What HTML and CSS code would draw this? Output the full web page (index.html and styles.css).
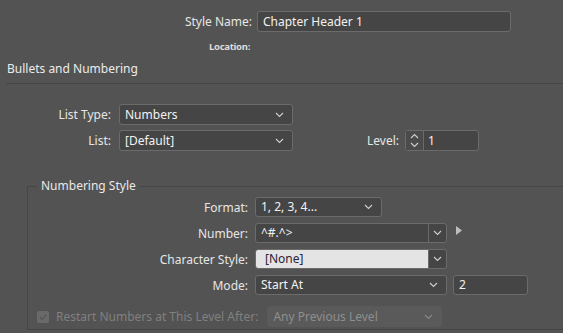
FILE: index.html
```html
<!DOCTYPE html>
<html>
<head>
<meta charset="utf-8">
<link rel="stylesheet" href="styles.css">
</head>
<body>
<div class="page">
  <div class="name-row">
    <span class="name-label">Style Name:</span>
    <div class="field name-field">Chapter Header 1</div>
  </div>
  <div class="loc-row"><span class="loc-label">Location:</span></div>
  <div class="heading">Bullets and Numbering</div>
  <div class="sep"></div>

  <div class="list-block">
    <div class="lrow">
      <span class="llabel">List Type:</span>
      <div class="field select list-select"><span class="val">Numbers</span>
        <svg class="chev" width="9" height="6" viewBox="0 0 9 6"><polyline points="1,1 4.5,4.5 8,1" fill="none" stroke="#cfcfcf" stroke-width="1.1"/></svg>
      </div>
    </div>
    <div class="lrow">
      <span class="llabel">List:</span>
      <div class="field select list-select"><span class="val">[Default]</span>
        <svg class="chev" width="9" height="6" viewBox="0 0 9 6"><polyline points="1,1 4.5,4.5 8,1" fill="none" stroke="#cfcfcf" stroke-width="1.1"/></svg>
      </div>
      <span class="level-label">Level:</span>
      <div class="field spinner">
        <div class="spin-btns">
          <svg width="9" height="6" viewBox="0 0 9 6"><polyline points="1,5 4.5,1.5 8,5" fill="none" stroke="#cfcfcf" stroke-width="1.1"/></svg>
          <svg width="9" height="6" viewBox="0 0 9 6"><polyline points="1,1 4.5,4.5 8,1" fill="none" stroke="#cfcfcf" stroke-width="1.1"/></svg>
        </div>
        <span class="spin-val">1</span>
      </div>
    </div>
  </div>

  <fieldset class="group">
    <legend class="legend">Numbering Style</legend>
    <div class="frow">
      <span class="flabel">Format:</span>
      <div class="field select fmt-select"><span class="val">1, 2, 3, 4...</span>
        <svg class="chev" width="9" height="6" viewBox="0 0 9 6"><polyline points="1,1 4.5,4.5 8,1" fill="none" stroke="#cfcfcf" stroke-width="1.1"/></svg>
      </div>
    </div>
    <div class="frow">
      <span class="flabel">Number:</span>
      <div class="field combo wide">
        <span class="val combo-val">^#.^&gt;</span>
        <span class="combo-btn"><svg width="9" height="6" viewBox="0 0 9 6"><polyline points="1,1 4.5,4.5 8,1" fill="none" stroke="#cfcfcf" stroke-width="1.1"/></svg></span>
      </div>
      <svg class="flyout" width="6" height="9" viewBox="0 0 6 9"><polygon points="0,0 6,4.5 0,9" fill="#bdbdbd"/></svg>
    </div>
    <div class="frow">
      <span class="flabel">Character Style:</span>
      <div class="field combo wide light">
        <span class="val combo-val light-val">[None]</span>
        <span class="combo-btn"><svg width="9" height="6" viewBox="0 0 9 6"><polyline points="1,1 4.5,4.5 8,1" fill="none" stroke="#cfcfcf" stroke-width="1.1"/></svg></span>
      </div>
    </div>
    <div class="frow">
      <span class="flabel">Mode:</span>
      <div class="field select wide"><span class="val">Start At</span>
        <svg class="chev" width="9" height="6" viewBox="0 0 9 6"><polyline points="1,1 4.5,4.5 8,1" fill="none" stroke="#cfcfcf" stroke-width="1.1"/></svg>
      </div>
      <div class="field num-field">2</div>
    </div>
    <div class="rrow">
      <span class="checkbox">
        <svg width="12" height="12" viewBox="0 0 12 12"><polyline points="2.8,6.2 5,8.4 9.4,3.6" fill="none" stroke="#5a5a5a" stroke-width="1.6"/></svg>
      </span>
      <span class="rlabel">Restart Numbers at This Level After:</span>
      <div class="field select disabled"><span class="val">Any Previous Level</span>
        <svg class="chev" width="9" height="6" viewBox="0 0 9 6"><polyline points="1,1 4.5,4.5 8,1" fill="none" stroke="#8a8a8a" stroke-width="1.1"/></svg>
      </div>
    </div>
  </fieldset>
</div>
</body>
</html>
```

FILE: styles.css
```css
html, body {
  margin: 0;
  padding: 0;
  background: #535353;
  overflow: hidden;
}
body {
  font-family: "Noto Sans", "Open Sans", sans-serif;
  font-size: 12px;
  color: #e6e6e6;
  width: 563px;
  height: 333px;
}
.page {
  display: flex;
  flex-direction: column;
}
.field {
  box-sizing: border-box;
  background: #454545;
  border: 1px solid #6b6b6b;
  border-radius: 3px;
  color: #f2f2f2;
  display: flex;
  align-items: center;
  line-height: 16px;
  white-space: nowrap;
}
.name-row {
  display: flex;
  align-items: center;
  margin-top: 11px;
  height: 21px;
}
.name-label {
  width: 252px;
  text-align: right;
  font-size: 12px;
}
.name-field {
  margin-left: 5px;
  width: 254px;
  height: 21px;
  padding-left: 5px;
}
.loc-row {
  display: flex;
  margin-top: 7px;
  height: 14px;
  align-items: center;
}
.loc-label {
  width: 250px;
  text-align: right;
  font-size: 9.5px;
  font-weight: bold;
  color: #dcdcdc;
  letter-spacing: -0.3px;
}
.heading {
  margin-top: 8px;
  margin-left: 7px;
  font-size: 12px;
  line-height: 16px;
  height: 16px;
  color: #ececec;
}
.sep {
  margin-top: 6px;
  margin-left: 6px;
  height: 0;
  border-top: 1px solid #464646;
}
.list-block {
  display: flex;
  flex-direction: column;
  gap: 5px;
  margin-top: 20px;
}
.lrow {
  display: flex;
  align-items: center;
  height: 21px;
}
.llabel {
  width: 111px;
  text-align: right;
}
.select {
  justify-content: space-between;
  padding-left: 5px;
  padding-right: 8px;
}
.list-select {
  margin-left: 8px;
  width: 174px;
  height: 21px;
}
.chev {
  flex: none;
}
.level-label {
  margin-left: 73px;
  width: 33px;
  text-align: right;
}
.spinner {
  margin-left: 6px;
  width: 74px;
  height: 21px;
}
.spin-btns {
  width: 18px;
  height: 100%;
  box-sizing: border-box;
  border-right: 1px solid #6b6b6b;
  display: flex;
  flex-direction: column;
  align-items: center;
  justify-content: center;
  gap: 3px;
  background: #4b4b4b;
}
.spin-btns svg {
  display: block;
}
.spin-val {
  padding-left: 4px;
}
.group {
  margin: 27px -20px 0 27px;
  padding: 3px 0 2px 9px;
  border: 1px solid #464646;
  min-width: 0;
  display: flex;
  flex-direction: column;
  gap: 6px;
}
.legend {
  padding: 0 4px;
  margin-left: 0;
  line-height: 16px;
  color: #e8e8e8;
}
.frow {
  display: flex;
  align-items: center;
  height: 20px;
}
.flabel {
  width: 211px;
  text-align: right;
}
.fmt-select {
  margin-left: 7px;
  width: 127px;
  height: 20px;
}
.wide {
  margin-left: 7px;
  width: 192px;
  height: 20px;
}
.combo {
  padding: 0;
  overflow: hidden;
}
.combo-val {
  flex: 1;
  height: 100%;
  display: flex;
  align-items: center;
  padding-left: 5px;
}
.light-val {
  background: #e4e4e4;
  color: #2c2436;
  padding-left: 9px;
}
.combo-btn {
  width: 18px;
  height: 100%;
  box-sizing: border-box;
  border-left: 1px solid #6b6b6b;
  display: flex;
  align-items: center;
  justify-content: center;
}
.flyout {
  margin-left: 9px;
  margin-top: -5px;
}
.num-field {
  margin-left: 6px;
  width: 75px;
  height: 20px;
  padding-left: 5px;
}
.rrow {
  display: flex;
  align-items: center;
  height: 21px;
  margin-top: 5px;
}
.checkbox {
  width: 12px;
  height: 12px;
  border-radius: 2px;
  background: #6a6a6a;
  display: flex;
}
.rlabel {
  margin-left: 7px;
  color: #808080;
}
.disabled {
  margin-left: 9px;
  width: 175px;
  height: 21px;
  background: #5a5a5a;
  border-color: #5a5a5a;
  color: #8e8e8e;
}
```
